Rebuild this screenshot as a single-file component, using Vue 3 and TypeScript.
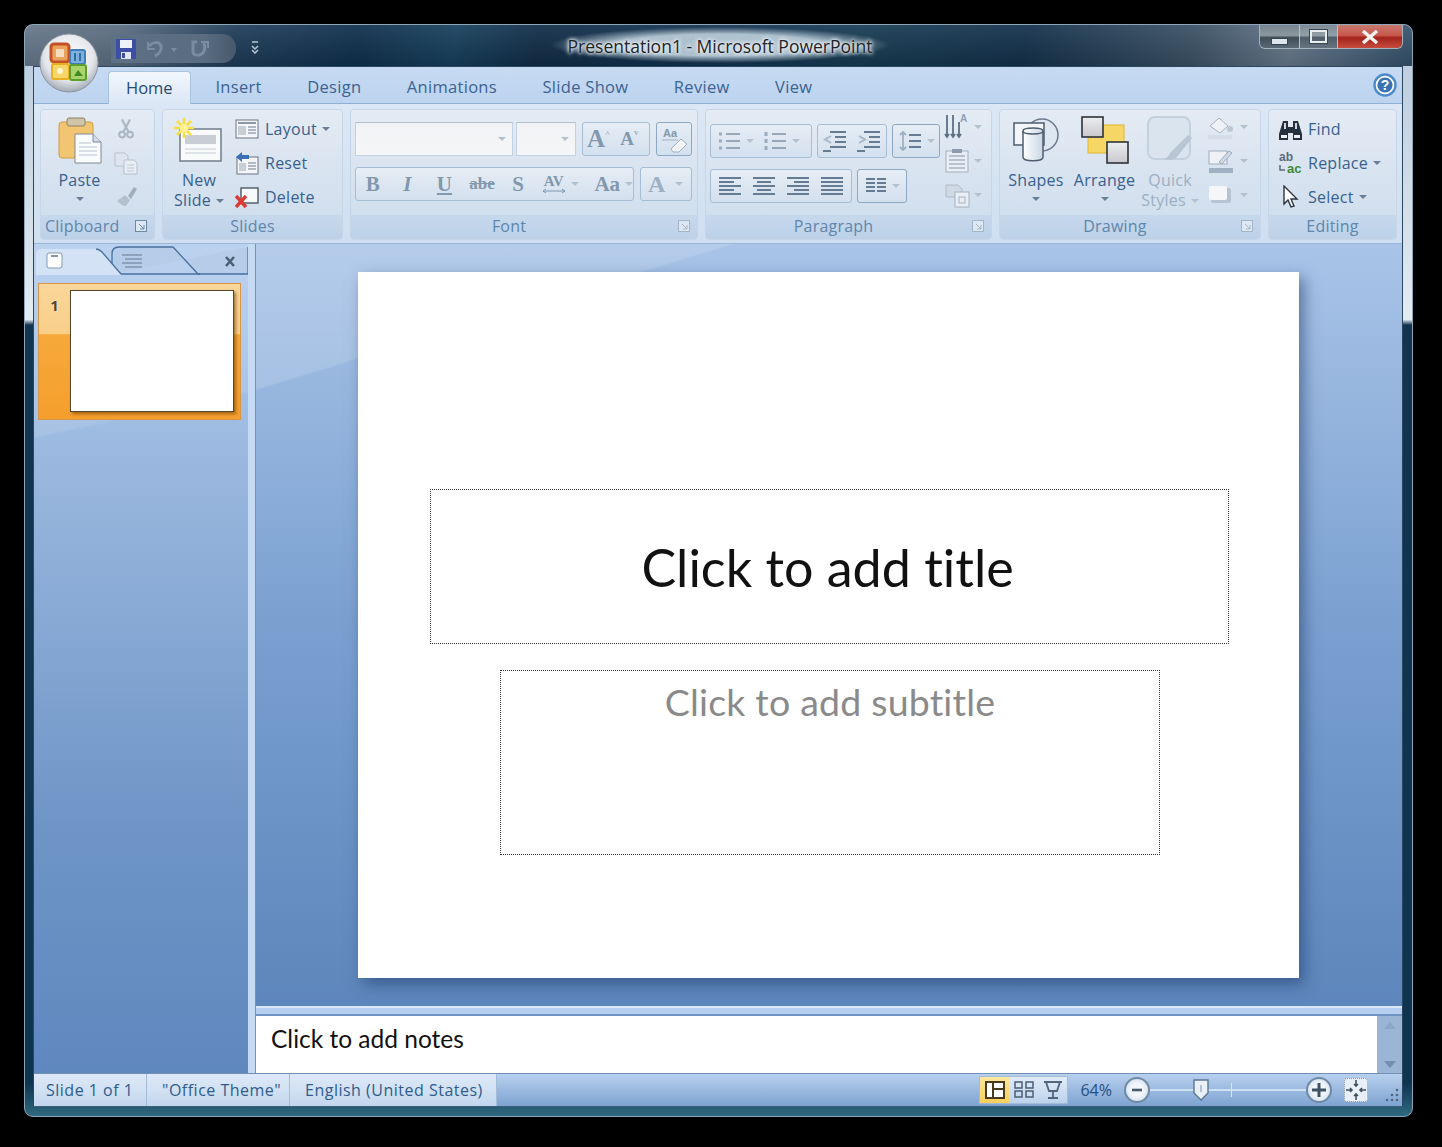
<template>
  <div class="window">
    <div class="office-btn">
      <svg width="60" height="60" viewBox="0 0 60 60">
        <defs>
          <radialGradient id="orb" cx="50%" cy="38%" r="60%">
            <stop offset="0" stop-color="#ffffff" />
            <stop offset="0.7" stop-color="#e4e6ea" />
            <stop offset="1" stop-color="#a9b0ba" />
          </radialGradient>
        </defs>
        <circle cx="30" cy="30" r="29" fill="url(#orb)" stroke="#8b949e" />
        <rect x="12" y="11" width="18" height="18" rx="3" fill="#e9a35c" stroke="#c4502a" stroke-width="3" />
        <rect x="17" y="16" width="8" height="8" fill="#f6dcc0" />
        <rect x="31" y="17" width="15" height="14" rx="2" fill="#7db0dd" stroke="#3f7fb5" stroke-width="2" />
        <path d="M36 20v8M41 20v8" stroke="#2d6da3" stroke-width="2" />
        <rect x="13" y="31" width="17" height="15" rx="2" fill="#f4d66a" stroke="#e8b020" stroke-width="2" />
        <circle cx="21" cy="38" r="3" fill="#fff7d0" />
        <rect x="31" y="32" width="16" height="15" rx="2" fill="#a9d46b" stroke="#5d9e2e" stroke-width="2" />
        <path d="M35 43l4-6 5 6z" fill="#3f8a25" />
      </svg>
    </div>

    <header class="titlebar">
      <div class="qat">
        <svg class="qat-save" width="22" height="22" viewBox="0 0 22 22">
          <rect x="1" y="1" width="20" height="20" rx="1" fill="#3d4ea6" />
          <rect x="5" y="2" width="12" height="8" fill="#eef1f8" />
          <rect x="6" y="14" width="10" height="7" fill="#dfe4ee" />
          <rect x="7" y="15" width="3" height="5" fill="#3d4ea6" />
        </svg>
        <svg width="34" height="20" viewBox="0 0 34 20" fill="none" stroke="#7a8c9f" stroke-width="3">
          <path d="M3 7c4-4 10-5 12 0 1 4-2 8-6 10" />
          <path d="M2 3v7h7" stroke-width="2" />
          <path d="M25 9l3 4 3-4z" fill="#7a8c9f" stroke="none" />
        </svg>
        <svg width="22" height="20" viewBox="0 0 22 20" fill="none" stroke="#7a8c9f" stroke-width="3">
          <path d="M8 3H4v10c0 4 8 4 10 1 2-3 2-7 1-10" />
          <path d="M12 3h7v6" stroke-width="2" />
        </svg>
      </div>
      <svg class="qat-more" width="10" height="14" viewBox="0 0 10 14" fill="none" stroke="#b9c6d2" stroke-width="1.5">
        <path d="M2 2h6M2 6l3 3 3-3M2 10l3 3 3-3" />
      </svg>
      <div class="title-text">Presentation1 - Microsoft PowerPoint</div>
      <div class="caption">
        <div class="cap cap-min"><span class="min-mark"></span></div>
        <div class="cap cap-max"><span class="max-mark"></span></div>
        <div class="cap cap-close">
          <svg width="18" height="14" viewBox="0 0 18 14" fill="none" stroke="#f4f1ef" stroke-width="3.4">
            <path d="M2 1l14 12M16 1L2 13" />
          </svg>
        </div>
      </div>
    </header>

    <div class="frame">
      <nav class="tabs">
        <div v-for="t in tabs" :key="t" class="tab" :class="{ active: t === 'Home' }">{{ t }}</div>
        <svg class="help" width="24" height="24" viewBox="0 0 24 24">
          <circle cx="12" cy="12" r="10.5" fill="#fff" stroke="#4b8ac8" stroke-width="2.4" />
          <circle cx="12" cy="12" r="7.6" fill="#3a73b5" />
          <text x="12" y="17" text-anchor="middle" class="help-q">?</text>
        </svg>
      </nav>

      <section class="ribbon">
        <div class="group g-clip">
          <div class="gbody">
            <div class="big paste">
              <svg width="46" height="48" viewBox="0 0 46 48">
                <rect x="2" y="6" width="34" height="36" rx="3" fill="#f2c572" stroke="#cf9a45" />
                <rect x="10" y="2" width="18" height="8" rx="2" fill="#cfc3a8" stroke="#8d8265" />
                <path d="M18 18h18l8 8v21H18z" fill="#fafbfd" stroke="#7f8a96" />
                <path d="M36 18v8h8" fill="#cfdcec" stroke="#7f8a96" />
                <path d="M22 27h12M22 31h18M22 35h18M22 39h18" stroke="#b9c3cf" />
              </svg>
              <span class="lbl">Paste</span>
              <i class="caret"></i>
            </div>
            <div class="stack mini">
              <div class="row">
                <svg width="16" height="24" viewBox="0 0 20 26" fill="none" stroke="#a7b4c1" stroke-width="2.6">
                  <path d="M5 1l8 15M15 1L7 16" />
                  <circle cx="5" cy="20" r="3.6" /><circle cx="15" cy="20" r="3.6" />
                </svg>
              </div>
              <div class="row">
                <svg width="26" height="24" viewBox="0 0 26 24">
                  <path d="M2 2h10l3 3v10H2z" fill="#dfe6ee" stroke="#b5c0cc" />
                  <path d="M11 9h10l3 3v11H11z" fill="#eaeff5" stroke="#b5c0cc" />
                  <path d="M14 14h7M14 17h7M14 20h7" stroke="#bcc8d3" />
                </svg>
              </div>
              <div class="row">
                <svg width="24" height="24" viewBox="0 0 24 24">
                  <path d="M3 16l8-6 5 5-4 6c-3 0-6-2-9-5z" fill="#b3bfcb" />
                  <path d="M14 11l6-9 3 2-6 10z" fill="#9eacb9" />
                </svg>
              </div>
            </div>
          </div>
          <div class="glabel">
            <span>Clipboard</span>
            <svg class="launcher" width="12" height="12" viewBox="0 0 12 12" fill="none" stroke="#6c8aa8">
              <rect x="0.5" y="0.5" width="11" height="11" fill="#dfe8f2" /><path d="M4 4l5 5M9 5v4H5" />
            </svg>
          </div>
        </div>

        <div class="group g-slides">
          <div class="gbody">
            <div class="big newslide">
              <svg width="52" height="46" viewBox="0 0 52 46">
                <rect x="7" y="12" width="41" height="32" fill="#f9fafc" stroke="#6f7c8a" stroke-width="1.5" />
                <rect x="12" y="18" width="31" height="9" fill="#c9ced4" />
                <path d="M12 32h31M12 36h31" stroke="#c4ccd6" />
                <g stroke="#f7e040" stroke-width="2.6">
                  <path d="M11 1v20M1 11h20M4 4l14 14M18 4L4 18" />
                </g>
                <circle cx="11" cy="11" r="4" fill="#fff29a" />
              </svg>
              <span class="lbl">New</span>
              <span class="lbl">Slide<i class="caret inline"></i></span>
            </div>
            <div class="stack">
              <div class="row">
                <svg class="ico" width="24" height="22" viewBox="0 0 24 22">
                  <rect x="1" y="2" width="22" height="18" fill="#f4f6f9" stroke="#6a7582" />
                  <path d="M3 5h18" stroke="#8d97a3" stroke-width="2" />
                  <rect x="3" y="8" width="8" height="9" fill="#c7ced6" />
                  <path d="M13 9h8M13 12h8M13 15h8" stroke="#6f7b88" />
                </svg>
                <span class="lbl">Layout</span><i class="caret inline"></i>
              </div>
              <div class="row">
                <svg class="ico" width="24" height="24" viewBox="0 0 24 24">
                  <rect x="2" y="6" width="21" height="17" fill="#f4f6f9" stroke="#6a7582" />
                  <rect x="4" y="12" width="7" height="8" fill="#c7ced6" />
                  <path d="M13 12h8M13 15h8M13 18h8" stroke="#6f7b88" />
                  <path d="M1 6l6-5v3h7v4H7v3z" fill="#3b6fb8" />
                </svg>
                <span class="lbl">Reset</span>
              </div>
              <div class="row">
                <svg class="ico" width="24" height="24" viewBox="0 0 24 24">
                  <rect x="6" y="3" width="17" height="15" fill="#f7f9fb" stroke="#4c5764" stroke-width="1.4" />
                  <path d="M1 11l10 11M11 11L1 22" stroke="#dc3a35" stroke-width="3.4" />
                </svg>
                <span class="lbl">Delete</span>
              </div>
            </div>
          </div>
          <div class="glabel"><span>Slides</span></div>
        </div>

        <div class="group g-font">
          <div class="gbody rows">
            <div class="fline">
              <div class="combo c-name"><i class="caret light"></i></div>
              <div class="combo c-size"><i class="caret light"></i></div>
              <div class="btns b-grow">
                <span class="gl g-a1">A<sup class="up-mark">^</sup></span>
                <span class="gl g-a2">A<sup class="up-mark">v</sup></span>
              </div>
              <div class="btns b-clear">
                <svg width="30" height="28" viewBox="0 0 30 28">
                  <text x="4" y="12" class="clear-a">Aa</text>
                  <path d="M3 15h16" stroke="#9fb0c2" />
                  <path d="M12 24l10-10 6 5-8 8h-6z" fill="#f2f4f7" stroke="#9fb0c2" />
                </svg>
              </div>
            </div>
            <div class="fline">
              <div class="btns b-fmt">
                <span class="gl b">B</span>
                <span class="gl i">I</span>
                <span class="gl u">U</span>
                <span class="gl strike">abe</span>
                <span class="gl s">S</span>
                <span class="gl av">
                  AV
                  <svg width="24" height="6" viewBox="0 0 24 6" fill="none" stroke="#8198ad">
                    <path d="M1 3h22M4 1L1 3l3 2M20 1l3 2-3 2" />
                  </svg>
                </span>
                <i class="caret light"></i>
                <span class="gl aa">Aa</span>
                <i class="caret light"></i>
              </div>
              <div class="btns b-color"><span class="gl a3">A</span><i class="caret light"></i></div>
            </div>
          </div>
          <div class="glabel has-launcher">
            <span>Font</span>
            <svg class="launcher" width="12" height="12" viewBox="0 0 12 12" fill="none" stroke="#a3b6c9">
              <rect x="0.5" y="0.5" width="11" height="11" fill="#dfe8f2" /><path d="M4 4l5 5M9 5v4H5" />
            </svg>
          </div>
        </div>

        <div class="group g-para">
          <div class="gbody">
            <div class="rows">
              <div class="fline">
                <div class="btns p-lists">
                  <svg width="24" height="24" viewBox="0 0 24 24" stroke="#7d92a7" stroke-width="1.6">
                    <path d="M9 5h14M9 12h14M9 19h14" />
                    <path d="M2 5h3M2 12h3M2 19h3" stroke-width="3" stroke="#9aacbe" />
                  </svg>
                  <i class="caret light"></i>
                  <svg width="24" height="24" viewBox="0 0 24 24" stroke="#7d92a7" stroke-width="1.6">
                    <path d="M9 5h14M9 12h14M9 19h14" />
                    <path d="M3 3v4M3 10v4M3 17v4" stroke-width="3" stroke="#9aacbe" />
                  </svg>
                  <i class="caret light"></i>
                </div>
                <div class="btns p-indent">
                  <svg width="26" height="24" viewBox="0 0 26 24" stroke="#657c93" stroke-width="2" fill="none">
                    <path d="M8 3h16M13 8h11M13 13h11M8 18h16M1 22h8" />
                    <path d="M9 7l-6 3.500 6 3.500" stroke="#a7b8c9" />
                  </svg>
                  <svg width="26" height="24" viewBox="0 0 26 24" stroke="#657c93" stroke-width="2" fill="none">
                    <path d="M8 3h16M13 8h11M13 13h11M8 18h16M1 22h8" />
                    <path d="M3 7l6 3.500-6 3.500" stroke="#a7b8c9" />
                  </svg>
                </div>
                <div class="btns p-spacing">
                  <svg width="24" height="24" viewBox="0 0 24 24" stroke="#657c93" stroke-width="1.8" fill="none">
                    <path d="M11 6h12M11 12h12M11 18h12" />
                    <path d="M5 3v18M2 6l3-3 3 3M2 18l3 3 3-3" stroke="#9db0c2" />
                  </svg>
                  <i class="caret light"></i>
                </div>
              </div>
              <div class="fline">
                <div class="btns p-align">
                  <svg width="24" height="22" viewBox="0 0 24 22" stroke="#657c93" stroke-width="2"><path d="M1 3h22M1 7h15M1 11h22M1 15h15M1 19h22" /></svg>
                  <svg width="24" height="22" viewBox="0 0 24 22" stroke="#657c93" stroke-width="2"><path d="M1 3h22M5 7h14M1 11h22M5 15h14M1 19h22" /></svg>
                  <svg width="24" height="22" viewBox="0 0 24 22" stroke="#657c93" stroke-width="2"><path d="M1 3h22M8 7h15M1 11h22M8 15h15M1 19h22" /></svg>
                  <svg width="24" height="22" viewBox="0 0 24 22" stroke="#657c93" stroke-width="2"><path d="M1 3h22M1 7h22M1 11h22M1 15h22M1 19h22" /></svg>
                </div>
                <div class="btns p-cols">
                  <svg width="22" height="20" viewBox="0 0 22 20" stroke="#657c93" stroke-width="2"><path d="M1 3h9M12 3h9M1 7h9M12 7h9M1 11h9M12 11h9M1 15h9M12 15h9" /></svg>
                  <i class="caret light"></i>
                </div>
              </div>
            </div>
            <div class="stack p-side">
              <div class="row">
                <svg width="26" height="26" viewBox="0 0 26 26" stroke="#5c7084" stroke-width="1.8" fill="none">
                  <path d="M3 1v22M9 1v22M15 8v15M1 20l2 3 2-3M7 20l2 3 2-3M13 20l2 3 2-3" />
                  <text x="16" y="8" class="dir-a">A</text>
                </svg>
                <i class="caret light"></i>
              </div>
              <div class="row">
                <svg width="26" height="26" viewBox="0 0 26 26">
                  <rect x="2" y="3" width="22" height="21" fill="#e9eef4" stroke="#a0b0c0" />
                  <path d="M5 8h16M5 12h16M5 16h16M5 20h16" stroke="#8095a9" />
                  <rect x="8" y="1" width="10" height="4" fill="#8b9caf" />
                </svg>
                <i class="caret light"></i>
              </div>
              <div class="row">
                <svg width="26" height="26" viewBox="0 0 26 26">
                  <path d="M2 3h12l4 4v8H2z" fill="#cfd9e3" stroke="#adbac7" />
                  <rect x="11" y="10" width="14" height="15" fill="#e9eef4" stroke="#a3b2c2" />
                  <rect x="15" y="15" width="6" height="6" fill="none" stroke="#a3b2c2" />
                </svg>
                <i class="caret light"></i>
              </div>
            </div>
          </div>
          <div class="glabel has-launcher">
            <span>Paragraph</span>
            <svg class="launcher" width="12" height="12" viewBox="0 0 12 12" fill="none" stroke="#a3b6c9">
              <rect x="0.5" y="0.5" width="11" height="11" fill="#dfe8f2" /><path d="M4 4l5 5M9 5v4H5" />
            </svg>
          </div>
        </div>

        <div class="group g-draw">
          <div class="gbody">
            <div class="big shapes">
              <svg width="48" height="46" viewBox="0 0 48 46">
                <defs>
                  <linearGradient id="cyl" x1="0" x2="1" y1="0" y2="0">
                    <stop offset="0" stop-color="#ffffff" />
                    <stop offset="1" stop-color="#c9d6e5" />
                  </linearGradient>
                </defs>
                <circle cx="30" cy="18" r="16" fill="#dde6f1" stroke="#6a7a8c" stroke-width="1.5" />
                <rect x="2" y="6" width="30" height="22" fill="#f2f5f9" stroke="#4f5d6d" stroke-width="1.5" />
                <path d="M11 14c0-4 20-4 20 0v26c0 5-20 5-20 0z" fill="url(#cyl)" stroke="#4f5d6d" stroke-width="1.5" />
                <path d="M11 14c0 4 20 4 20 0" fill="none" stroke="#4f5d6d" stroke-width="1.5" />
              </svg>
              <span class="lbl">Shapes</span>
              <i class="caret"></i>
            </div>
            <div class="big arrange">
              <svg width="50" height="50" viewBox="0 0 50 50">
                <defs>
                  <linearGradient id="sq" x1="0" x2="0" y1="0" y2="1">
                    <stop offset="0" stop-color="#eceef1" />
                    <stop offset="1" stop-color="#c9c7cc" />
                  </linearGradient>
                </defs>
                <rect x="8" y="10" width="36" height="28" fill="#f6d765" stroke="#e1b530" />
                <rect x="2" y="2" width="21" height="20" fill="url(#sq)" stroke="#2e3338" stroke-width="1.6" />
                <rect x="27" y="27" width="21" height="21" fill="url(#sq)" stroke="#2e3338" stroke-width="1.6" />
              </svg>
              <span class="lbl">Arrange</span>
              <i class="caret"></i>
            </div>
            <div class="big quick">
              <svg width="48" height="50" viewBox="0 0 48 50">
                <rect x="2" y="2" width="42" height="42" rx="7" fill="#dae4ef" stroke="#c3d0dd" stroke-width="2" />
                <path d="M24 38l18-18 4 3-16 20c-4 2-8 2-12 1 3-1 5-3 6-6z" fill="#b8c5d2" />
              </svg>
              <span class="lbl off">Quick</span>
              <span class="lbl off">Styles<i class="caret inline light"></i></span>
            </div>
            <div class="stack d-side">
              <div class="row">
                <svg width="28" height="24" viewBox="0 0 28 24">
                  <path d="M3 11l9-8 9 8-8 7z" fill="#eef2f6" stroke="#a6b4c2" />
                  <circle cx="23" cy="14" r="3" fill="#bcc8d4" />
                  <rect x="1" y="20" width="24" height="4" fill="#d4dee8" />
                </svg>
                <i class="caret light"></i>
              </div>
              <div class="row">
                <svg width="28" height="24" viewBox="0 0 28 24">
                  <rect x="2" y="2" width="18" height="13" fill="#eef2f6" stroke="#9bacbd" />
                  <path d="M12 13l10-11 3 2-10 11z" fill="#cfdae5" stroke="#9bacbd" />
                  <rect x="2" y="19" width="24" height="5" fill="#9eb0c2" />
                </svg>
                <i class="caret light"></i>
              </div>
              <div class="row">
                <svg width="28" height="20" viewBox="0 0 28 20">
                  <rect x="4" y="3" width="20" height="15" rx="2" fill="#b6c3d0" />
                  <rect x="2" y="1" width="18" height="14" rx="2" fill="#f4f6f9" />
                </svg>
                <i class="caret light"></i>
              </div>
            </div>
          </div>
          <div class="glabel has-launcher">
            <span>Drawing</span>
            <svg class="launcher" width="12" height="12" viewBox="0 0 12 12" fill="none" stroke="#a3b6c9">
              <rect x="0.5" y="0.5" width="11" height="11" fill="#dfe8f2" /><path d="M4 4l5 5M9 5v4H5" />
            </svg>
          </div>
        </div>

        <div class="group g-edit">
          <div class="gbody">
            <div class="stack">
              <div class="row">
                <svg class="ico" width="25" height="24" viewBox="0 0 25 24">
                  <path d="M5 4h5v6h5V4h5l4 13v6h-9v-7h-5v7H1v-6z" fill="#26303c" />
                  <path d="M3 18h6v3H3zM16 18h6v3h-6z" fill="#eef2f6" />
                  <path d="M7 6v6M18 6v6" stroke="#cdd7e2" stroke-width="2" />
                </svg>
                <span class="lbl">Find</span>
              </div>
              <div class="row">
                <svg class="ico" width="25" height="26" viewBox="0 0 25 26">
                  <text x="1" y="11" class="rep-a">ab</text>
                  <text x="9" y="23" class="rep-b">ac</text>
                  <path d="M2 15v5h5" stroke="#5a6c7e" stroke-width="1.5" fill="none" />
                </svg>
                <span class="lbl">Replace</span><i class="caret inline"></i>
              </div>
              <div class="row">
                <svg class="ico" width="25" height="24" viewBox="0 0 25 24">
                  <path d="M6 1v18l4-4 3 7 3-1-3-7h6z" fill="#fff" stroke="#2a3340" stroke-width="1.4" />
                </svg>
                <span class="lbl">Select</span><i class="caret inline"></i>
              </div>
            </div>
          </div>
          <div class="glabel"><span>Editing</span></div>
        </div>
      </section>

      <div class="workspace">
        <aside class="leftpane">
          <svg class="panetabs" width="214" height="30" viewBox="0 0 214 30">
            <path d="M78 28V8c0-5 2-7 7-7h54l25 27h50V1" fill="#b6cdea" stroke="#47709f" stroke-width="1.3" />
            <path d="M84 28h82" fill="none" stroke="#47709f" stroke-width="1.3" />
            <path d="M2 29V8c0-4 3-5 6-5h54c3 0 4 1 6 3l19 22v1z" fill="#d3e2f5" />
            <path d="M62 3c3 0 4 1 6 3l19 22" fill="none" stroke="#47709f" stroke-width="1.3" />
            <rect x="13" y="7" width="15" height="15" rx="2" fill="#fff" stroke="#8699ad" />
            <path d="M17 10h7" stroke="#5d6f83" stroke-width="1.5" />
            <path d="M88 9h20M91 13h17M88 17h20M91 21h17" stroke="#66798d" stroke-width="1.2" />
            <path d="M192 11l8 9M200 11l-8 9" stroke="#4a5f74" stroke-width="2.6" />
          </svg>
          <div class="thumb">
            <span class="thumb-num">1</span>
            <div class="thumb-slide"></div>
          </div>
        </aside>
        <div class="split"></div>
        <div class="editor">
          <div class="stage">
            <div class="slide">
              <div class="ph ph-title">Click to add title</div>
              <div class="ph ph-sub">Click to add subtitle</div>
            </div>
          </div>
          <div class="notes-split"></div>
          <div class="notes">
            <div class="notes-text">Click to add notes</div>
            <div class="notes-scroll">
              <svg width="14" height="10" viewBox="0 0 14 10"><path d="M1 9l6-7 6 7z" fill="#8ba6c6" /></svg>
              <svg width="14" height="10" viewBox="0 0 14 10"><path d="M1 2l6 7 6-7z" fill="#718faf" /></svg>
            </div>
          </div>
        </div>
      </div>

      <footer class="status">
        <div class="st-left">
          <span class="st s1">Slide 1 of 1</span>
          <span class="st s2">"Office Theme"</span>
          <span class="st s3">English (United States)</span>
        </div>
        <div class="st-right">
          <div class="views">
            <div class="view on">
              <svg width="20" height="18" viewBox="0 0 20 18" fill="none" stroke="#4a3a1c" stroke-width="2">
                <rect x="1" y="1" width="18" height="16" fill="#fff" /><path d="M8 1v16M8 8h11" />
              </svg>
            </div>
            <div class="view">
              <svg width="20" height="18" viewBox="0 0 20 18" fill="none" stroke="#51657c" stroke-width="1.6">
                <rect x="1" y="1" width="7" height="6" /><rect x="12" y="1" width="7" height="6" />
                <rect x="1" y="10" width="7" height="6" /><rect x="12" y="10" width="7" height="6" />
              </svg>
            </div>
            <div class="view">
              <svg width="20" height="20" viewBox="0 0 20 20" fill="none" stroke="#51657c" stroke-width="1.8">
                <path d="M1 2h18M3 2l3 9h8l3-9M10 11v6M5 18h10" />
              </svg>
            </div>
          </div>
          <span class="zoom-val">64%</span>
          <div class="round">
            <svg width="12" height="12" viewBox="0 0 12 12"><path d="M1 6h10" stroke="#4a5d70" stroke-width="2.6" /></svg>
          </div>
          <div class="slider">
            <span class="tick"></span>
            <svg class="thumb-knob" width="16" height="22" viewBox="0 0 16 22">
              <path d="M1 1h14v13l-7 7-7-7z" fill="#e9f0f8" stroke="#5b7694" stroke-width="1.4" />
              <path d="M8 6v7" stroke="#9db3c9" stroke-width="1.5" />
            </svg>
          </div>
          <div class="round">
            <svg width="16" height="16" viewBox="0 0 16 16"><path d="M1 8h14M8 1v14" stroke="#3f5264" stroke-width="3" /></svg>
          </div>
          <div class="fit">
            <svg width="22" height="22" viewBox="0 0 22 22" fill="none" stroke="#3f5264" stroke-width="1.6">
              <path d="M11 1v6M9 5l2 2 2-2M11 21v-6M9 17l2-2 2 2M1 11h6M5 9l2 2-2 2M21 11h-6M17 9l-2 2 2 2" />
            </svg>
          </div>
          <svg class="grip" width="16" height="16" viewBox="0 0 16 16" fill="#4f6880">
            <circle cx="14" cy="3" r="1.300" /><circle cx="14" cy="8" r="1.300" /><circle cx="14" cy="13" r="1.300" />
            <circle cx="9" cy="8" r="1.300" /><circle cx="9" cy="13" r="1.300" /><circle cx="4" cy="13" r="1.300" />
          </svg>
        </div>
      </footer>
    </div>
  </div>
</template>

<script setup lang="ts">
const tabs: string[] = ['Home', 'Insert', 'Design', 'Animations', 'Slide Show', 'Review', 'View']
</script>

<style>
html,
body {
  background: #000;
}
</style>

<style scoped>
.window {
  position: relative;
  box-sizing: border-box;
  width: 1389px;
  height: 1093px;
  margin: 24px 0 0 24px;
  border-radius: 9px;
  border: 1px solid #8fa6b8;
  overflow: hidden;
  display: flex;
  flex-direction: column;
  background: linear-gradient(to bottom, #b9cadb 0, #e3ebf2 27%, #12344f 27.500%, #0f3450 97%, #2f6a80 100%);
  font-family: "Open Sans", "Liberation Sans", sans-serif;
}

.office-btn {
  position: absolute;
  left: 14px;
  top: 8px;
  width: 60px;
  height: 60px;
  z-index: 3;
}

.titlebar {
  height: 41px;
  flex: none;
  position: relative;
  display: flex;
  align-items: flex-start;
  padding-left: 86px;
  background:
    linear-gradient(to bottom, rgba(255, 255, 255, 0.07), rgba(0, 0, 0, 0.12)),
    linear-gradient(100deg, #66788a 0, #5a6d80 7%, #1f3c58 15%, #0f2f4c 24%, #163f5c 31%, #102c46 37%, #123250 50%, #173a52 60%, #12304a 72%, #3a5064 84%, #65778a 91%, #33506a 100%);
}

.qat {
  margin-top: 9px;
  width: 125px;
  height: 29px;
  box-sizing: border-box;
  padding-left: 4px;
  display: flex;
  align-items: center;
  gap: 9px;
  border-radius: 0 14px 14px 0;
  background: linear-gradient(to right, #5d7085, #5a6c80 75%, #46596d);
}

.qat-more {
  margin: 15px 0 0 14px;
}

.title-text {
  position: absolute;
  left: 525px;
  top: 2px;
  width: 340px;
  height: 36px;
  line-height: 38px;
  text-align: center;
  font-size: 17.5px;
  color: #1d2328;
  text-shadow: 0 0 5px #e8f0f5, 0 0 5px #e8f0f5, 0 0 3px #fff;
  background: radial-gradient(ellipse closest-side, rgba(190, 208, 220, 0.9) 60%, rgba(190, 208, 220, 0) 100%);
}

.caption {
  margin-left: auto;
  margin-right: 9px;
  display: flex;
  height: 23px;
  border: 1px solid #a5b3bf;
  border-top: 0;
  border-radius: 0 0 6px 6px;
  overflow: hidden;
}

.cap {
  display: flex;
  align-items: center;
  justify-content: center;
  border-right: 1px solid #b5c1cb;
}

.cap-min {
  width: 39px;
  background: linear-gradient(to bottom, #77848f 0, #8c989f 45%, #404e5a 55%, #5c6a76 100%);
}

.cap-max {
  width: 37px;
  background: linear-gradient(to bottom, #7e8a95 0, #94a0a8 45%, #505d69 55%, #667480 100%);
}

.cap-close {
  width: 64px;
  border-right: 0;
  background: linear-gradient(to bottom, #c77b6f 0, #c8574c 45%, #a2231c 55%, #c84c3e 100%);
}

.min-mark {
  width: 15px;
  height: 5px;
  margin-top: 10px;
  background: #dfe4e8;
  border: 1px solid #39454f;
}

.max-mark {
  width: 13px;
  height: 9px;
  border: 2px solid #e8edf0;
  outline: 1px solid #39454f;
}

.frame {
  flex: 1;
  min-height: 0;
  margin: 0 9px 9px 8px;
  display: flex;
  flex-direction: column;
  border: 1px solid #2b4660;
  border-bottom-color: #3a5f7c;
  background: #bfd4ee;
}

.tabs {
  flex: none;
  height: 36px;
  box-sizing: border-box;
  padding: 4px 0 0 74px;
  display: flex;
  align-items: stretch;
  position: relative;
  background: linear-gradient(to bottom, #c6daf2, #bdd3ef);
}

.tab {
  padding: 0 22.750px;
  line-height: 32px;
  font-size: 16.500px;
  letter-spacing: 0.3px;
  color: #3c6391;
}

.tab.active {
  padding: 0 17px;
  margin: 0 2px -1px 0;
  letter-spacing: 0;
  color: #264a74;
  border: 1px solid #a9c3df;
  border-bottom: 0;
  border-radius: 4px 4px 0 0;
  background: linear-gradient(to bottom, #f2f7fc, #dbe7f5);
  position: relative;
  z-index: 1;
}

.help {
  position: absolute;
  right: 5px;
  top: 6px;
}

.help-q {
  font: bold 14px "Liberation Sans", sans-serif;
  fill: #fff;
}

.ribbon {
  flex: none;
  height: 141px;
  box-sizing: border-box;
  padding: 5px 6px 4px;
  display: flex;
  gap: 7px;
  background: linear-gradient(to bottom, #dbe7f5, #cfdff1);
  border-top: 1px solid #8fb0d4;
  border-bottom: 1px solid #9ab8d9;
}

.group {
  box-sizing: border-box;
  height: 131px;
  flex: none;
  display: flex;
  flex-direction: column;
  border: 1px solid #c6d6e8;
  border-radius: 4px;
  background: linear-gradient(to bottom, #e4ebf4 0, #d8e3f0 50%, #cddcec 100%);
}

.g-clip { width: 115px; }
.g-slides { width: 181px; }
.g-font { width: 348px; }
.g-para { width: 287px; }
.g-draw { width: 262px; }
.g-edit { width: 129px; }

.gbody {
  flex: 1;
  min-height: 0;
  padding-top: 2px;
  display: flex;
}

.glabel {
  flex: none;
  height: 24px;
  position: relative;
  box-sizing: border-box;
  text-align: center;
  line-height: 23px;
  font-size: 16px;
  letter-spacing: 0.2px;
  color: #5f86ab;
  background: linear-gradient(to bottom, #c6d8ec, #bcd1e8);
  border-radius: 0 0 3px 3px;
}

.glabel.has-launcher {
  padding-right: 30px;
}

.launcher {
  position: absolute;
  right: 7px;
  top: 5px;
}

.g-clip .glabel {
  text-align: left;
  padding-left: 4px;
}

.lbl {
  font-size: 16px;
  line-height: 20px;
  letter-spacing: 0.25px;
  color: #38618e;
  white-space: nowrap;
}

.lbl.off {
  color: #9cafc2;
}

.caret {
  display: inline-block;
  flex: none;
  width: 0;
  height: 0;
  border-left: 4px solid transparent;
  border-right: 4px solid transparent;
  border-top: 4px solid #6a7f96;
}

.caret.inline {
  margin-left: 5px;
  vertical-align: 3px;
}

.caret.light {
  border-top-color: #b3c1cf;
}

.big {
  display: flex;
  flex-direction: column;
  align-items: center;
}

.big > svg {
  height: 53px;
  flex: none;
  padding-top: 3px;
  box-sizing: border-box;
}

.big .caret {
  margin-top: 7px;
}

.big .caret.inline {
  margin-top: 0;
}

.paste { width: 77px; }
.mini { margin-left: -6px; }
.newslide { width: 72px; }
.newslide span:first-of-type { margin-top: 5px; }
.paste .lbl { margin-top: 5px; }

.shapes { width: 68px; }
.arrange { width: 69px; }
.quick { width: 62px; }
.shapes .lbl,
.arrange .lbl,
.quick span:first-of-type { margin-top: 5px; }

.g-draw .gbody { padding-left: 2px; }
.g-edit .gbody { padding-left: 9px; }
.g-font .gbody { padding-left: 4px; }
.g-para .gbody { padding-left: 4px; }

.stack {
  display: flex;
  flex-direction: column;
}

.row {
  height: 34px;
  display: flex;
  align-items: center;
}

.mini .row {
  width: 28px;
  justify-content: center;
  opacity: 0.95;
}

.ico {
  margin-right: 5px;
  flex: none;
}

.g-slides .ico {
  margin-right: 6px;
}

.rows {
  display: flex;
  flex-direction: column;
  gap: 11px;
  padding-top: 12px;
}

.fline {
  display: flex;
  align-items: stretch;
  height: 34px;
}

.combo {
  box-sizing: border-box;
  display: flex;
  align-items: center;
  justify-content: flex-end;
  padding-right: 6px;
  background: linear-gradient(to bottom, #f0f2f5, #f5f6f7);
  border: 1px solid #c3d1e0;
  border-top-color: #b3bfcc;
}

.c-name { width: 158px; }
.c-size { width: 60px; margin-left: 3px; margin-right: 6px; }

.btns {
  box-sizing: border-box;
  display: flex;
  align-items: center;
  border: 1px solid #a6bdd6;
  border-radius: 3px;
  background: linear-gradient(to bottom, #e6edf5, #d3e0ee);
}

.gl {
  font-family: "Liberation Serif", serif;
  font-weight: bold;
  color: #8198ad;
  text-align: center;
}

.b-grow { width: 68px; margin-right: 6px; padding-left: 4px; gap: 10px; }
.g-a1 { font-size: 25px; }
.g-a2 { font-size: 19px; }
.up-mark { font-size: 9px; line-height: 0; vertical-align: 10px; color: #9fb0c2; }
.b-clear { width: 36px; justify-content: center; border-color: #8ea7c2; }
.clear-a { font: bold 11px "Liberation Sans", sans-serif; fill: #8198ad; }

.b-fmt { width: 279px; margin-right: 6px; }
.b-fmt .gl { font-size: 21px; }
.b-fmt .b { width: 34px; }
.b-fmt .i { width: 36px; font-style: italic; }
.b-fmt .u { width: 39px; text-decoration: underline; }
.b-fmt .strike { width: 37px; font-size: 17px; text-decoration: line-through; }
.b-fmt .s { width: 36px; }
.b-fmt .av {
  width: 36px;
  font-size: 15px;
  line-height: 14px;
  display: flex;
  flex-direction: column;
  align-items: center;
}
.b-fmt .aa { width: 36px; margin-left: 10px; }
.b-color { width: 52px; gap: 10px; padding-left: 7px; }
.a3 { font-size: 24px; color: #9cb0c3; }

.p-lists { width: 102px; margin-right: 5px; padding-left: 6px; gap: 5px; }
.p-lists .caret { margin-right: 4px; }
.p-indent { width: 70px; margin-right: 5px; justify-content: space-around; }
.p-spacing { width: 48px; padding-left: 5px; gap: 5px; border-color: #8ea7c2; }
.p-align { width: 142px; margin-right: 5px; justify-content: space-around; padding: 0 2px; }
.p-cols { width: 50px; padding-left: 7px; gap: 5px; border-color: #8ea7c2; }
.p-side { margin: -2px 0 0 4px; }
.p-side .row { gap: 4px; }
.dir-a { font: bold 10px "Liberation Sans", sans-serif; fill: #8da0b3; stroke: none; }

.d-side { margin: -2px 0 0 6px; }
.d-side .row { gap: 5px; }

.rep-a { font: bold 12px "Liberation Sans", sans-serif; fill: #5a6c7e; }
.rep-b { font: bold 13px "Liberation Sans", sans-serif; fill: #3b8a3a; }

.workspace {
  flex: 1;
  min-height: 0;
  display: flex;
}

.leftpane {
  width: 214px;
  flex: none;
  display: flex;
  flex-direction: column;
  padding-top: 2px;
  box-sizing: border-box;
  background:
    linear-gradient(168deg, rgba(255, 255, 255, 0.1) 0 22%, rgba(255, 255, 255, 0) 22.300%),
    linear-gradient(to bottom, #b4cdee 0, #6f95c6 70%, #5f88bf 100%);
}

.panetabs {
  flex: none;
  display: block;
}

.thumb {
  margin: 7px 0 0 4px;
  width: 203px;
  height: 137px;
  box-sizing: border-box;
  padding: 6px 6px 7px 0;
  display: flex;
  border: 1px solid #d99646;
  background: linear-gradient(to bottom, #fad69a 0, #f9cf88 37%, #f6a93a 37.500%, #f49f2d 100%);
}

.thumb-num {
  width: 31px;
  flex: none;
  text-align: center;
  padding-top: 5px;
  font: bold 15px "Open Sans", sans-serif;
  color: #5a4422;
  text-shadow: 0 0 2px #fff;
}

.thumb-slide {
  flex: 1;
  background: #fff;
  border: 1px solid #54482f;
  box-shadow: 2px 2px 3px rgba(110, 60, 0, 0.6);
}

.split {
  width: 8px;
  flex: none;
  background: #c6dbf3;
  border-right: 1px solid #6c94c6;
  box-sizing: border-box;
}

.editor {
  flex: 1;
  min-width: 0;
  display: flex;
  flex-direction: column;
}

.stage {
  flex: 1;
  min-height: 0;
  padding: 28px 0 0 102px;
  background:
    linear-gradient(163deg, rgba(255, 255, 255, 0.14) 0 13%, rgba(255, 255, 255, 0) 13.200%),
    linear-gradient(to bottom, #a9c4e8 0, #7aa0d0 50%, #5d86bc 100%);
}

.slide {
  width: 941px;
  height: 706px;
  box-sizing: border-box;
  padding: 217px 0 0 72px;
  background: #fff;
  box-shadow: 5px 6px 14px rgba(30, 55, 100, 0.55);
  font-family: Lato, "Open Sans", sans-serif;
  font-variant-ligatures: none;
}

.ph {
  box-sizing: border-box;
  display: flex;
  justify-content: center;
  border: 1px dotted #333;
}

.ph-title {
  width: 799px;
  height: 155px;
  padding-right: 4px;
  align-items: center;
  font-size: 52px;
  color: #111;
}

.ph-sub {
  width: 660px;
  height: 185px;
  margin: 26px 0 0 70px;
  padding-top: 8px;
  font-size: 37.500px;
  line-height: 46px;
  letter-spacing: 0.2px;
  color: #8a8a8a;
}

.notes-split {
  flex: none;
  height: 10px;
  background: #b6cff0;
  border-top: 2px solid #dbe8f8;
  border-bottom: 2px solid #7095c4;
  box-sizing: border-box;
}

.notes {
  flex: none;
  height: 57px;
  display: flex;
  background: #fff;
}

.notes-text {
  flex: 1;
  padding: 7px 0 0 15px;
  font-family: Lato, "Open Sans", sans-serif;
  font-variant-ligatures: none;
  font-size: 24.500px;
  line-height: 32px;
  color: #111;
}

.notes-scroll {
  width: 25px;
  flex: none;
  display: flex;
  flex-direction: column;
  align-items: center;
  justify-content: space-between;
  padding: 4px 0;
  box-sizing: border-box;
  background: #9bb5d6;
}

.status {
  flex: none;
  height: 33px;
  display: flex;
  border-top: 1px solid #6f8fb5;
  box-sizing: border-box;
  background: linear-gradient(to bottom, #b8d0ee, #7ea3d1);
}

.st-left {
  display: flex;
  height: 100%;
}

.st {
  display: flex;
  align-items: center;
  height: 100%;
  box-sizing: border-box;
  font-size: 16px;
  letter-spacing: 0.5px;
  color: #2f5c8d;
  border-right: 1px solid #a3bcd9;
  background: linear-gradient(to bottom, #dde9f7 0, #cfdff2 60%, #c2d6ee 100%);
}

.s1 { width: 113px; padding-left: 12px; }
.s2 { width: 143px; padding-left: 15px; }
.s3 { width: 207px; padding-left: 15px; }

.st-right {
  margin-left: auto;
  display: flex;
  align-items: center;
  height: 100%;
  padding-right: 3px;
}

.views {
  display: flex;
  align-self: stretch;
  margin: 2px 0;
  border: 1px solid #a4bbd6;
  background: linear-gradient(to bottom, #e2ecf8, #bcd2ec);
}

.view {
  width: 29px;
  display: flex;
  align-items: center;
  justify-content: center;
}

.view.on {
  background: linear-gradient(to bottom, #fbe79e, #f8cf5a);
}

.zoom-val {
  margin: 0 12px;
  font-size: 16px;
  color: #264f82;
}

.round {
  width: 26px;
  height: 26px;
  box-sizing: border-box;
  border-radius: 50%;
  border: 2px solid #708aa6;
  background: radial-gradient(circle, #f2f6fb 40%, #c3d5ea 100%);
  display: flex;
  align-items: center;
  justify-content: center;
}

.slider {
  position: relative;
  width: 156px;
  height: 2px;
  background: #cfe0f3;
}

.tick {
  position: absolute;
  left: 81px;
  top: -6px;
  width: 1px;
  height: 14px;
  background: #d8e5f4;
}

.thumb-knob {
  position: absolute;
  left: 43px;
  top: -10px;
}

.fit {
  margin-left: 12px;
  width: 24px;
  height: 24px;
  display: flex;
  align-items: center;
  justify-content: center;
  background: #e8eff7;
  border: 1px dotted #7b8fa4;
  box-sizing: border-box;
  border-radius: 3px;
}

.grip {
  margin: 9px 0 0 15px;
}
</style>
